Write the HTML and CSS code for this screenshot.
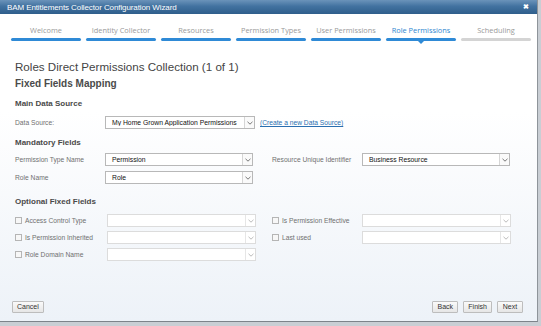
FILE: index.html
```html
<!DOCTYPE html>
<html>
<head>
<meta charset="utf-8">
<link rel="stylesheet" href="styles.css">
</head>
<body>
<div class="window">
  <div class="titlebar">
    <span class="title-text">BAM Entitlements Collector Configuration Wizard</span>
    <span class="close">&#x2716;</span>
  </div>
  <div class="steps">
    <div class="step"><span class="step-label">Welcome</span><span class="step-bar"></span></div>
    <div class="step"><span class="step-label">Identity Collector</span><span class="step-bar"></span></div>
    <div class="step"><span class="step-label">Resources</span><span class="step-bar"></span></div>
    <div class="step"><span class="step-label">Permission Types</span><span class="step-bar"></span></div>
    <div class="step"><span class="step-label">User Permissions</span><span class="step-bar"></span></div>
    <div class="step active"><span class="step-label">Role Permissions</span><span class="step-bar"></span><span class="pointer"></span></div>
    <div class="step todo"><span class="step-label">Scheduling</span><span class="step-bar"></span></div>
  </div>
  <div class="content">
    <h1 class="page-title">Roles Direct Permissions Collection (1 of 1)</h1>
    <h2 class="section-title">Fixed Fields Mapping</h2>
    <h3 class="group-title">Main Data Source</h3>
    <div class="row first">
      <span class="label">Data Source:</span>
      <div class="select ds"><span class="value">My Home Grown Application Permissions</span><span class="arrow"><svg width="6" height="4" viewBox="0 0 6 4"><path d="M0.5 0.8 L3 3.2 L5.5 0.8" fill="none" stroke="#777" stroke-width="1"/></svg></span></div>
      <a class="link" href="#">(Create a new Data Source)</a>
    </div>
    <h3 class="group-title mand">Mandatory Fields</h3>
    <div class="grid">
      <div class="row">
        <span class="label">Permission Type Name</span>
        <div class="select"><span class="value">Permission</span><span class="arrow"><svg width="6" height="4" viewBox="0 0 6 4"><path d="M0.5 0.8 L3 3.2 L5.5 0.8" fill="none" stroke="#777" stroke-width="1"/></svg></span></div>
      </div>
      <div class="row">
        <span class="label">Resource Unique Identifier</span>
        <div class="select"><span class="value">Business Resource</span><span class="arrow"><svg width="6" height="4" viewBox="0 0 6 4"><path d="M0.5 0.8 L3 3.2 L5.5 0.8" fill="none" stroke="#777" stroke-width="1"/></svg></span></div>
      </div>
      <div class="row">
        <span class="label">Role Name</span>
        <div class="select"><span class="value">Role</span><span class="arrow"><svg width="6" height="4" viewBox="0 0 6 4"><path d="M0.5 0.8 L3 3.2 L5.5 0.8" fill="none" stroke="#777" stroke-width="1"/></svg></span></div>
      </div>
    </div>
    <h3 class="group-title opt">Optional Fixed Fields</h3>
    <div class="grid optional">
      <div class="row">
        <span class="label"><span class="cb"></span>Access Control Type</span>
        <div class="select dim"><span class="value"></span><span class="arrow"><svg width="6" height="4" viewBox="0 0 6 4"><path d="M0.5 0.8 L3 3.2 L5.5 0.8" fill="none" stroke="#bbb" stroke-width="1"/></svg></span></div>
      </div>
      <div class="row">
        <span class="label"><span class="cb"></span>Is Permission Effective</span>
        <div class="select dim"><span class="value"></span><span class="arrow"><svg width="6" height="4" viewBox="0 0 6 4"><path d="M0.5 0.8 L3 3.2 L5.5 0.8" fill="none" stroke="#bbb" stroke-width="1"/></svg></span></div>
      </div>
      <div class="row">
        <span class="label"><span class="cb"></span>Is Permission Inherited</span>
        <div class="select dim"><span class="value"></span><span class="arrow"><svg width="6" height="4" viewBox="0 0 6 4"><path d="M0.5 0.8 L3 3.2 L5.5 0.8" fill="none" stroke="#bbb" stroke-width="1"/></svg></span></div>
      </div>
      <div class="row">
        <span class="label"><span class="cb"></span>Last used</span>
        <div class="select dim"><span class="value"></span><span class="arrow"><svg width="6" height="4" viewBox="0 0 6 4"><path d="M0.5 0.8 L3 3.2 L5.5 0.8" fill="none" stroke="#bbb" stroke-width="1"/></svg></span></div>
      </div>
      <div class="row">
        <span class="label"><span class="cb"></span>Role Domain Name</span>
        <div class="select dim"><span class="value"></span><span class="arrow"><svg width="6" height="4" viewBox="0 0 6 4"><path d="M0.5 0.8 L3 3.2 L5.5 0.8" fill="none" stroke="#bbb" stroke-width="1"/></svg></span></div>
      </div>
    </div>
  </div>
  <div class="footer">
    <button class="btn">Cancel</button>
    <div class="btn-group">
      <button class="btn">Back</button>
      <button class="btn">Finish</button>
      <button class="btn">Next</button>
    </div>
  </div>
</div>
</body>
</html>
```
FILE: styles.css
```css
html, body {
  margin: 0;
  padding: 0;
  width: 541px;
  height: 326px;
  overflow: hidden;
  background: #c9ced4;
  font-family: "Liberation Sans", Arial, sans-serif;
}
.window {
  width: 538px;
  height: 322px;
  border-right: 1px solid #8e949a;
  border-bottom: 1px solid #7d838a;
  display: flex;
  flex-direction: column;
  background: linear-gradient(to bottom, #ffffff 0%, #ffffff 35%, #edf2f8 100%);
  box-sizing: border-box;
}
.titlebar {
  height: 14px;
  flex: none;
  display: flex;
  align-items: center;
  justify-content: space-between;
  padding: 0 8px 0 7px;
  background: linear-gradient(to bottom, #6b93ba 0%, #4272a0 45%, #2f5e8b 100%);
  color: #fff;
  font-size: 8px;
}
.title-text { letter-spacing: -0.1px; }
.close { font-size: 7px; font-weight: bold; }
.steps {
  display: flex;
  gap: 5px;
  padding: 11px 0 0 11px;
  height: 31px;
  box-sizing: border-box;
  flex: none;
}
.step {
  width: 70px;
  display: flex;
  flex-direction: column;
  align-items: center;
  position: relative;
  font-family: "Open Sans", "DejaVu Sans", sans-serif;
}
.step-label {
  font-size: 7.4px;
  color: #9a9a9a;
  line-height: 10px;
  white-space: nowrap;
}
.step-bar {
  margin-top: 3px;
  width: 70px;
  height: 3px;
  border-radius: 2px;
  background: #2f8ad6;
}
.step.active .step-label { color: #2e86d0; }
.step.todo .step-bar { background: #d4d4d4; }
.pointer {
  position: absolute;
  left: 32px;
  top: 16px;
  width: 0;
  height: 0;
  border-left: 3px solid transparent;
  border-right: 3px solid transparent;
  border-top: 3px solid #2f8ad6;
}
.content {
  flex: 1;
  padding: 0 15px;
  color: #4a4a4a;
}
.page-title {
  margin: 14px 0 0 0;
  font-size: 11.6px;
  font-weight: normal;
  color: #444;
  line-height: 16px;
}
.section-title {
  margin: 3px 0 0 0;
  font-size: 10px;
  font-weight: bold;
  color: #4a4a4a;
  line-height: 12px;
}
.group-title {
  margin: 9px 0 0 0;
  font-size: 8px;
  font-weight: bold;
  color: #4a4a4a;
  line-height: 10px;
}
.group-title.mand { margin-top: 9px; }
.group-title.opt { margin-top: 13px; }
.row {
  display: flex;
  align-items: center;
  height: 13px;
  margin-top: 7px;
}
.label {
  width: 90px;
  flex: none;
  font-size: 6.7px;
  color: #707070;
  display: flex;
  align-items: center;
  white-space: nowrap;
}
.select {
  width: 148px;
  height: 13px;
  box-sizing: border-box;
  border: 1px solid #b8b8b8;
  background: #fff;
  display: flex;
  align-items: center;
}
.select.ds { width: 150px; }
.value {
  flex: 1;
  padding-left: 6px;
  font-size: 6.8px;
  color: #111;
  white-space: nowrap;
  overflow: hidden;
}
.arrow {
  width: 9px;
  height: 100%;
  border-left: 1px solid #d6d6d6;
  display: flex;
  align-items: center;
  justify-content: center;
  background: #fafafa;
}
.select.dim { border-color: #dcdcdc; }
.select.dim .arrow { border-left-color: #e6e6e6; background: #fff; }
.link {
  margin-left: 5px;
  font-size: 6.7px;
  color: #2a6fb0;
  text-decoration: underline;
}
.grid {
  display: grid;
  grid-template-columns: 257px 240px;
}
.grid .row { margin-top: 5px; }
.grid.optional .row { margin-top: 4px; }
.grid.optional .select { width: 149px; }
.grid.optional .row:nth-child(odd) .label { width: 92px; }
.grid.optional .row:first-child { margin-top: 7px; }
.grid.optional .row:nth-child(2) { margin-top: 7px; }
.cb {
  width: 5px;
  height: 5px;
  border: 1px solid #b5b5b5;
  background: #f7f7f7;
  margin-right: 3px;
  flex: none;
}
.footer {
  flex: none;
  display: flex;
  justify-content: space-between;
  align-items: center;
  padding: 0 14px 8px 12px;
}
.btn-group { display: flex; gap: 5px; }
.btn {
  height: 12px;
  padding: 0 4px;
  min-width: 26px;
  font-family: "Liberation Sans", Arial, sans-serif;
  font-size: 7px;
  color: #333;
  border: 1px solid #bdbdbd;
  border-radius: 1px;
  background: linear-gradient(to bottom, #fafafa, #e6e6e6);
  line-height: 10px;
}
```
